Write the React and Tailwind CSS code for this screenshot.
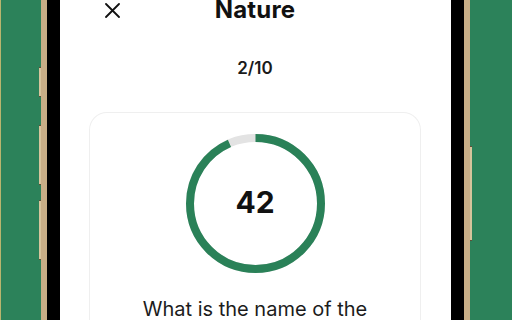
function CloseIcon() {
  return (
    <svg width="15" height="15" viewBox="0 0 15 15" className="absolute left-[45px] top-[3px]">
      <path d="M1 1L14 14M14 1L1 14" stroke="#111" strokeWidth="1.8" strokeLinecap="round" />
    </svg>
  );
}

function Timer({ value = 42, total = 45 }) {
  const r = 65.5;
  const c = 2 * Math.PI * r;
  const done = (value / total) * c;

  return (
    <div className="relative w-[139px] h-[139px]">
      <svg width="139" height="139" viewBox="0 0 139 139" className="-rotate-90">
        <circle cx="69.5" cy="69.5" r={r} fill="none" stroke="#e3e3e3" strokeWidth="8" />
        <circle
          cx="69.5"
          cy="69.5"
          r={r}
          fill="none"
          stroke="#2a8158"
          strokeWidth="8"
          strokeDasharray={`${done} ${c}`}
        />
      </svg>
      <div className="absolute inset-0 flex items-center justify-center pb-[3px]">
        <span className="text-[30px] font-bold text-[#111] leading-none">{value}</span>
      </div>
    </div>
  );
}

export default function App() {
  return (
    <div
      className="w-[512px] h-[320px] overflow-hidden bg-[#2c825a] border-l border-[#b9b56e] flex justify-center"
      style={{ fontFamily: "Inter, 'Noto Sans', sans-serif" }}
    >
      <div className="relative ml-[-3px]">
        {/* side buttons */}
        <span className="absolute left-[-2px] top-[67px] w-[2px] h-[30px] bg-[#d6c49c] border-y border-[#5e4f38]" />
        <span className="absolute left-[-2px] top-[125px] w-[2px] h-[60px] bg-[#d6c49c] border-y border-[#5e4f38]" />
        <span className="absolute left-[-2px] top-[200px] w-[2px] h-[60px] bg-[#d6c49c] border-y border-[#5e4f38]" />
        <span className="absolute right-[-2px] top-[146px] w-[2px] h-[95px] bg-[#d6c49c] border-y border-[#5e4f38]" />

        <div className="h-[320px] border-x-[6px] border-[#c8ae86] bg-black px-[13px]">
          <div className="w-[391px] h-full bg-white flex flex-col items-center">
            <div className="w-full relative flex items-center justify-center h-[20px]">
              <CloseIcon />
              <h1 className="text-[24px] font-bold text-[#111] leading-none tracking-[0.2px]">Nature</h1>
            </div>

            <p className="mt-[40px] text-[17px] font-semibold text-[#1a1a1a] leading-none">2/10</p>

            <div className="mt-[35px] w-[332px] flex-1 rounded-t-[18px] border border-b-0 border-[#efefef] flex flex-col items-center pt-[21px]">
              <Timer />
              <p className="mt-[22px] text-[20px] text-[#1c1c1c] leading-[28px]">
                What is the name of the
              </p>
            </div>
          </div>
        </div>
      </div>
    </div>
  );
}
